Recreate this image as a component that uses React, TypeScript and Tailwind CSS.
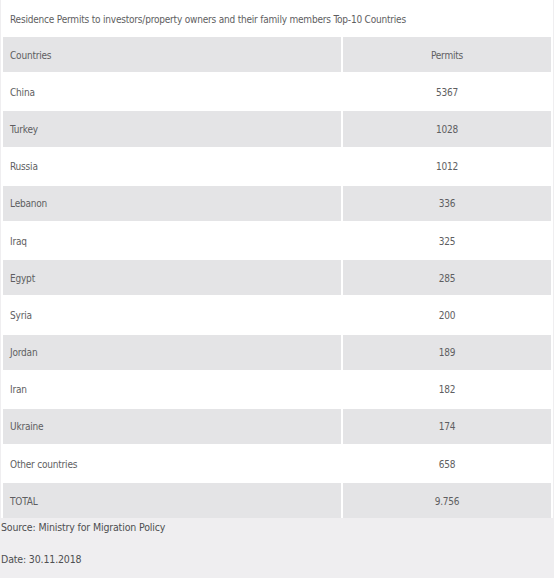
const rows = [
  { country: "China", permits: "5367" },
  { country: "Turkey", permits: "1028" },
  { country: "Russia", permits: "1012" },
  { country: "Lebanon", permits: "336" },
  { country: "Iraq", permits: "325" },
  { country: "Egypt", permits: "285" },
  { country: "Syria", permits: "200" },
  { country: "Jordan", permits: "189" },
  { country: "Iran", permits: "182" },
  { country: "Ukraine", permits: "174" },
  { country: "Other countries", permits: "658" },
  { country: "TOTAL", permits: "9.756" },
];

const font = {
  fontFamily:
    '"Liberation Sans Narrow", "DejaVu Sans Condensed", Roboto, sans-serif',
};

function App() {
  return (
    <div
      className="min-h-screen w-[554px] bg-[#efeef0] text-[10px] tracking-[-0.2px] text-[#5e5e61]"
      style={font}
    >
      <div className="ml-px w-[552px] bg-white px-[2px]">
        <div className="flex h-[37px] items-center pl-[7px] pt-px">
          Residence Permits to investors/property owners and their family members Top-10 Countries
        </div>
        <div className="grid grid-cols-[338px_1fr] gap-[2px]">
          <div className="flex h-[35.2px] items-center bg-[#e4e4e6] pl-[7px] pt-px">
            Countries
          </div>
          <div className="flex h-[35.2px] items-center justify-center bg-[#e4e4e6] pt-px">
            Permits
          </div>
          {rows.map((r, i) => {
            const bg = i % 2 === 1 ? "bg-[#e4e4e6]" : "bg-white";
            return (
              <>
                <div
                  key={r.country}
                  className={`flex h-[35.2px] items-center pl-[7px] pt-px ${bg}`}
                >
                  {r.country}
                </div>
                <div
                  key={r.country + "-n"}
                  className={`flex h-[35.2px] items-center justify-center pt-px ${bg}`}
                >
                  {r.permits}
                </div>
              </>
            );
          })}
        </div>
      </div>
      <p className="pl-px pt-px text-[10.5px] leading-[16px] tracking-[-0.15px] text-[#4e4e51]">
        Source: Ministry for Migration Policy
      </p>
      <p className="mt-[16px] pl-px text-[10.5px] leading-[16px] tracking-[-0.15px] text-[#4e4e51]">
        Date: 30.11.2018
      </p>
    </div>
  );
}

export default App;
